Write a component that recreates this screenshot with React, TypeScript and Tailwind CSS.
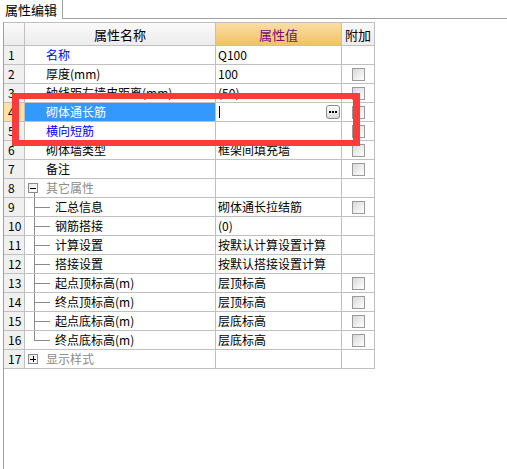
import React from "react";

type Row = {
  no: number;
  name: string;
  value?: string;
  check?: boolean;
  kind?: "blue" | "selected" | "group-open" | "group-closed" | "child" | "normal";
  lastChild?: boolean;
};

const ROWS: Row[] = [
  { no: 1, name: "名称", value: "Q100", kind: "blue" },
  { no: 2, name: "厚度(mm)", value: "100", check: true },
  { no: 3, name: "轴线距左墙皮距离(mm)", value: "(50)", check: true },
  { no: 4, name: "砌体通长筋", value: "", check: true, kind: "selected" },
  { no: 5, name: "横向短筋", value: "", check: true, kind: "blue" },
  { no: 6, name: "砌体墙类型", value: "框架间填充墙", check: true },
  { no: 7, name: "备注", value: "", check: true },
  { no: 8, name: "其它属性", kind: "group-open" },
  { no: 9, name: "汇总信息", value: "砌体通长拉结筋", check: true, kind: "child" },
  { no: 10, name: "钢筋搭接", value: "(0)", kind: "child" },
  { no: 11, name: "计算设置", value: "按默认计算设置计算", kind: "child" },
  { no: 12, name: "搭接设置", value: "按默认搭接设置计算", kind: "child" },
  { no: 13, name: "起点顶标高(m)", value: "层顶标高", check: true, kind: "child" },
  { no: 14, name: "终点顶标高(m)", value: "层顶标高", check: true, kind: "child" },
  { no: 15, name: "起点底标高(m)", value: "层底标高", check: true, kind: "child" },
  { no: 16, name: "终点底标高(m)", value: "层底标高", check: true, kind: "child", lastChild: true },
  { no: 17, name: "显示样式", kind: "group-closed" },
];

const FONT = { fontFamily: "'Noto Sans CJK SC', 'DejaVu Sans', sans-serif" };

function CheckBox() {
  return (
    <span className="block w-[13px] h-[13px] border border-[#9a9a9a] bg-gradient-to-br from-[#d8d8d8] via-[#ececec] to-white" />
  );
}

function TreeBox({ open }: { open: boolean }) {
  return (
    <span className="relative w-[10px] h-[10px] border border-[#8a8a8a] bg-gradient-to-br from-[#e6e6e6] to-white flex items-center justify-center shrink-0">
      <span className="absolute w-[6px] h-px bg-black" />
      {!open && <span className="absolute w-px h-[6px] bg-black" />}
    </span>
  );
}

function NameCell({ row }: { row: Row }) {
  const k = row.kind ?? "normal";
  if (k === "group-open" || k === "group-closed") {
    return (
      <div className="relative h-full flex items-center pl-[3px] gap-[8px]">
        <TreeBox open={k === "group-open"} />
        <span className="text-[#8c8c8c]">{row.name}</span>
        {k === "group-open" && (
          <span className="absolute left-[9px] top-[14px] bottom-0 w-px bg-[#8a8a8a]" />
        )}
      </div>
    );
  }
  if (k === "child") {
    return (
      <div className="relative h-full flex items-center pl-[30px]">
        <span
          className={
            row.lastChild
              ? "absolute left-[9px] top-0 h-[10px] w-px bg-[#8a8a8a]"
              : "absolute left-[9px] top-0 bottom-0 w-px bg-[#8a8a8a]"
          }
        />
        <span className="absolute left-[9px] top-[9px] w-[16px] h-px bg-[#8a8a8a]" />
        <span className="text-black">{row.name}</span>
      </div>
    );
  }
  return (
    <div
      className={
        k === "selected"
          ? "h-full flex items-center pl-[21px] bg-[#3399ff] text-white"
          : k === "blue"
          ? "h-full flex items-center pl-[21px] text-[#0000ff]"
          : "h-full flex items-center pl-[21px] text-black"
      }
    >
      {row.name}
    </div>
  );
}

export default function App() {
  return (
    <div className="relative w-[507px] h-[469px] bg-white overflow-hidden text-[12px] leading-none" style={FONT}>
      {/* tab strip */}
      <div className="flex h-[19px]">
        <div className="w-[63px] h-full border-r border-[#a0a0a0] flex items-center pl-[5px] text-[13px] text-black">
          属性编辑
        </div>
        <div className="flex-1 border-b border-[#a0a0a0]" />
      </div>

      {/* panel */}
      <div className="mt-[3px] ml-[3px] border-l border-[#a0a0a0] h-[447px]">
        <div className="w-[371px] border-t border-r border-[#c0c0c0]">
          {/* header */}
          <div className="flex h-[23px] border-b border-[#c0c0c0]">
            <div className="w-[21px] border-r border-[#c0c0c0] bg-gradient-to-b from-[#fafafa] to-[#ececec]" />
            <div className="w-[191px] border-r border-[#c0c0c0] bg-gradient-to-b from-[#fafafa] to-[#ececec] flex items-center justify-center text-[13px] text-black">
              属性名称
            </div>
            <div className="w-[126px] border-r border-[#c0c0c0] bg-gradient-to-b from-[#fbdea4] to-[#f1c265] flex items-center justify-center text-[13px] text-[#7a0a7a]">
              属性值
            </div>
            <div className="flex-1 bg-gradient-to-b from-[#fafafa] to-[#ececec] flex items-center justify-center text-[13px] text-black">
              附加
            </div>
          </div>

          {ROWS.map((row) => (
            <div key={row.no} className="flex h-[19px] border-b border-[#c0c0c0]">
              <div
                className={
                  row.kind === "selected"
                    ? "w-[21px] border-r border-[#c0c0c0] bg-[#fde0a8] flex items-center pl-[4px]"
                    : "w-[21px] border-r border-[#c0c0c0] bg-[#f0f0f0] flex items-center pl-[4px]"
                }
              >
                {row.no}
              </div>
              <div className="w-[191px] border-r border-[#c0c0c0]">
                <NameCell row={row} />
              </div>
              <div className="w-[126px] border-r border-[#c0c0c0] flex items-center pl-[2px] text-black whitespace-nowrap overflow-hidden">
                {row.kind === "selected" ? (
                  <div className="flex items-center w-full pr-[1px]">
                    <span className="w-px h-[12px] bg-black ml-[1px]" />
                    <span className="ml-auto w-[14px] h-[14px] rounded-[3px] border border-[#8a8a8a] bg-gradient-to-b from-white to-[#dcdcdc] flex items-center justify-center gap-[1px]">
                      <span className="w-[2px] h-[2px] bg-black" />
                      <span className="w-[2px] h-[2px] bg-black" />
                      <span className="w-[2px] h-[2px] bg-black" />
                    </span>
                  </div>
                ) : (
                  row.value
                )}
              </div>
              <div className="flex-1 flex items-center justify-center">
                {row.check && <CheckBox />}
              </div>
            </div>
          ))}
        </div>
      </div>

      {/* red highlight annotation */}
      <div className="absolute left-[12px] top-[93px] w-[348px] h-[53px] border-x-[7px] border-y-[6px] border-[#fc3b3b]" />
    </div>
  );
}
